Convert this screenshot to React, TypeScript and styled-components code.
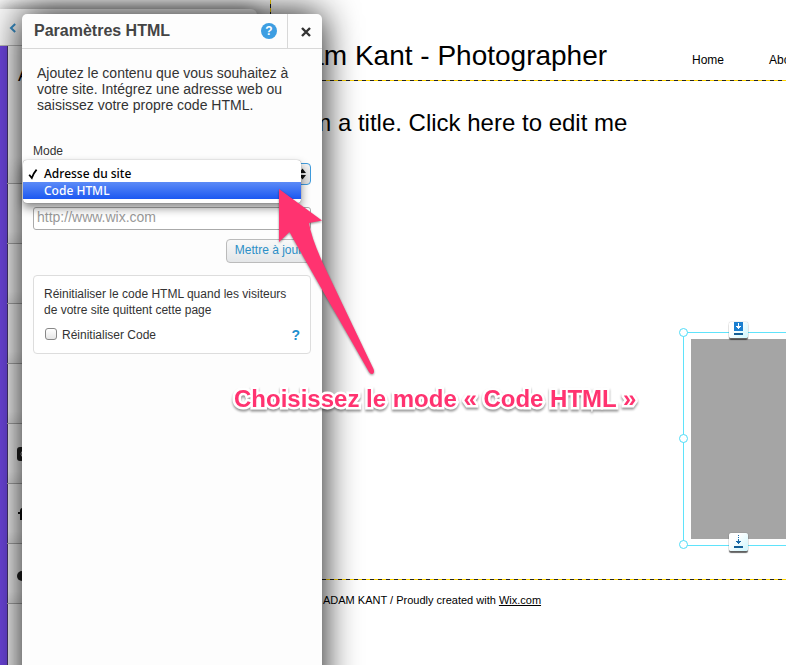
import React, { useState } from "react";
import styled, { createGlobalStyle } from "styled-components";

const SANS = '"Liberation Sans", Arial, sans-serif';

const GlobalStyle = createGlobalStyle`
  *, *::before, *::after { box-sizing: border-box; }
  html, body { margin: 0; padding: 0; }
  body { background: #fff; font-family: ${SANS}; font-size: 12px; overflow: hidden; }
  h1, h2, p { margin: 0; font-weight: 400; }
  button, input, select { font-family: inherit; }
`;

const Screen = styled.div`
  position: relative;
  min-height: 100vh;
  overflow: hidden;
`;

/* ---------- edited web site ---------- */

const Site = styled.main`
  display: flex;
  flex-direction: column;
  min-height: 100vh;
  margin-left: 270px;
  color: #000;
  background: repeating-linear-gradient(180deg, #ffd500 0 4px, #222 4px 8px) left top / 1px 100% no-repeat;
`;

const DashedRule = styled.div`
  height: 1px;
  background: repeating-linear-gradient(90deg, #ffd500 0 4px, #222 4px 8px);
`;

const SiteHeader = styled.header`
  display: flex;
  align-items: flex-start;
  justify-content: space-between;
  height: 80px;
  padding: 40px 0 0 4px;
  white-space: nowrap;
`;

const SiteName = styled.h1`
  font-size: 28px;
  line-height: 32px;
`;

const SiteNav = styled.nav`
  display: flex;
  flex: none;
  gap: 45px;
  width: 94px;
  line-height: 40px;
`;

const NavLink = styled.a`
  color: #000;
  font-size: 12px;
  text-decoration: none;
`;

const Headline = styled.h2`
  padding: 26px 0 0 30px;
  font-size: 24px;
  line-height: 32px;
  white-space: nowrap;
`;

const Stage = styled.section`
  display: flex;
  justify-content: flex-end;
  padding: 193px 0 33px;
  overflow: hidden;
`;

const Selection = styled.div`
  position: relative;
  width: 103px;
  padding: 6px 0 6px 7px;
  border: 1px solid #5fe3fb;
  border-right: 0;
`;

const Placeholder = styled.div`
  height: 200px;
  background: #a5a5a5;
`;

const Handle = styled.span<{ $top: string }>`
  position: absolute;
  left: -5px;
  top: ${(p) => p.$top};
  width: 9px;
  height: 9px;
  margin-top: -5px;
  border: 1px solid #4fdcf7;
  border-radius: 50%;
  background: #fff;
`;

const AnchorButton = styled.button<{ $edge: "top" | "bottom" }>`
  position: absolute;
  left: 45px;
  ${(p) => p.$edge}: ${(p) => (p.$edge === "top" ? "-11px" : "-6px")};
  display: flex;
  align-items: flex-start;
  justify-content: center;
  width: 19px;
  height: ${(p) => (p.$edge === "top" ? 16 : 18)}px;
  padding: 0;
  border: 0;
  border-radius: 2px;
  background: linear-gradient(135deg, #fff 30%, #cdf6fd);
  box-shadow: 0 2px 1px rgba(0, 0, 0, 0.6), 0 0 1px rgba(0, 0, 0, 0.5);
`;

const SiteFooter = styled.footer`
  padding: 12px 0 0 53px;
  font-size: 11px;
  line-height: 16px;
  a { color: #000; }
`;

/* ---------- panel behind the dialog ---------- */

const SidePanel = styled.aside`
  position: absolute;
  top: 9px;
  bottom: 0;
  left: 0;
  width: 257px;
  display: flex;
  flex-direction: column;
  border-top-right-radius: 6px;
  background: #fafafa;
  box-shadow: 0 0 20px rgba(0, 0, 0, 0.55);
`;

const SideHeader = styled.div`
  height: 37px;
  padding: 10px 6px;
  border-bottom: 1px solid #bbb;
`;

const BackButton = styled.button`
  display: flex;
  align-items: center;
  justify-content: center;
  width: 14px;
  height: 18px;
  padding: 0;
  border: 0;
  background: none;
`;

const SideList = styled.div`
  flex: 1;
  border-left: 7px solid #6c45de;
  box-shadow: inset 1px 0 0 #46336f;
`;

const SideRow = styled.div<{ $tall?: boolean }>`
  display: flex;
  align-items: center;
  height: ${(p) => (p.$tall ? 138 : 60)}px;
  padding-left: 10px;
  border-bottom: 1px solid #aaa;
  background: linear-gradient(transparent 80%, rgba(0, 0, 0, 0.08));
`;

const SideTitle = styled.span`
  align-self: flex-start;
  margin-top: 19px;
  padding-left: 1px;
  font-size: 18px;
`;

/* ---------- settings dialog ---------- */

const Dialog = styled.section`
  position: absolute;
  top: 14px;
  bottom: -60px;
  left: 22px;
  width: 300px;
  border-radius: 5px;
  background: #fdfdfd;
  box-shadow: 0 0 36px rgba(0, 0, 0, 0.95);
  color: #333;
`;

const DialogHeader = styled.header`
  display: flex;
  align-items: center;
  height: 35px;
  padding-left: 12px;
  border-bottom: 1px solid #d8d8d8;
`;

const DialogTitle = styled.h2`
  flex: 1;
  font-size: 16px;
  line-height: 20px;
  font-weight: 700;
  color: #444;
`;

const HelpButton = styled.button`
  width: 16px;
  height: 16px;
  margin-right: 10px;
  padding: 0;
  border: 0;
  border-radius: 50%;
  background: #3d9ee2;
  color: #fff;
  font-size: 12px;
  font-weight: 700;
  line-height: 16px;
`;

const CloseButton = styled.button`
  display: flex;
  align-items: center;
  justify-content: center;
  width: 35px;
  height: 34px;
  padding: 2px 0 0 2px;
  border: 0;
  border-left: 1px solid #d8d8d8;
  background: none;
`;

const DialogBody = styled.div`
  display: flex;
  flex-direction: column;
  padding: 16px 11px;
`;

const Intro = styled.p`
  padding-left: 4px;
  font-size: 14px;
  line-height: 16px;
  margin-bottom: 30px;
`;

const ModeLabel = styled.label`
  font-size: 12px;
  line-height: 16px;
`;

const ModeField = styled.div`
  position: relative;
  margin: 4px 0 22px;
`;

const ModeSelect = styled.select`
  display: block;
  width: 100%;
  height: 22px;
  padding: 0 20px 0 10px;
  appearance: none;
  border: 1px solid #3f9bdc;
  border-radius: 4px;
  background: linear-gradient(#f4f4f4, #dedede);
  font-size: 12px;
`;

const Carets = styled.svg`
  position: absolute;
  top: 5px;
  right: 5px;
  pointer-events: none;
`;

const Menu = styled.div`
  position: absolute;
  top: -3px;
  left: -10px;
  right: 10px;
  z-index: 2;
  padding: 5px 0 4px;
  border-radius: 4px;
  background: #fff;
  box-shadow: 0 0 1px rgba(0, 0, 0, 0.5), 0 5px 10px rgba(0, 0, 0, 0.45);
`;

const MenuItem = styled.button<{ $active: boolean }>`
  display: flex;
  align-items: center;
  width: 100%;
  height: 17px;
  padding: 0 0 0 5px;
  border: 0;
  gap: 5px;
  background: ${(p) => (p.$active ? "linear-gradient(#5c8bf7, #1c58f1)" : "none")};
  color: ${(p) => (p.$active ? "#fff" : "#000")};
  font-family: "Noto Sans", "Open Sans", sans-serif;
  font-size: 12px;
  font-weight: 500;
  line-height: 17px;
  text-align: left;
`;

const Tick = styled.span`
  display: flex;
  width: 11px;
`;

const UrlInput = styled.input`
  width: 100%;
  height: 23px;
  padding: 0 3px 3px;
  border: 1px solid #aaa;
  border-radius: 3px;
  background: #fff;
  font-size: 14px;
  &::placeholder { color: #999; opacity: 1; }
`;

const UpdateButton = styled.button`
  align-self: flex-end;
  height: 24px;
  width: 85px;
  margin: 9px 0 12px;
  padding: 0 0 2px;
  border: 1px solid #bbb;
  border-radius: 4px;
  background: linear-gradient(#f8f8f8, #e4e6e8);
  color: #2b8fc7;
  font-size: 12px;
`;

const ResetBox = styled.div`
  display: flex;
  flex-direction: column;
  gap: 9px;
  padding: 10px;
  border: 1px solid #ddd;
  border-radius: 4px;
  background: #fff;
`;

const ResetText = styled.p`
  line-height: 16px;
  white-space: nowrap;
`;

const ResetRow = styled.div`
  display: flex;
  align-items: center;
  height: 16px;
`;

const Check = styled.input`
  appearance: none;
  width: 12px;
  height: 12px;
  margin: 0 5px 2px 1px;
  border: 1px solid #888;
  border-radius: 3px;
  background: linear-gradient(#fff, #e6e6e6);
`;

const ResetLabel = styled.label`
  flex: 1;
`;

const InlineHelp = styled.button`
  padding: 0;
  border: 0;
  background: none;
  color: #1f8fce;
  font-size: 14px;
  font-weight: 700;
  line-height: 16px;
`;

/* ---------- annotation ---------- */

const Pointer = styled.svg`
  position: absolute;
  left: 270px;
  top: 180px;
  z-index: 3;
  pointer-events: none;
  filter: drop-shadow(0 1px 1px rgba(0, 0, 0, 0.45));
`;

const Callout = styled.p`
  position: absolute;
  left: 234px;
  top: 384px;
  z-index: 3;
  color: #ff3370;
  font-size: 24px;
  font-weight: 700;
  line-height: 30px;
  white-space: nowrap;
  -webkit-text-stroke: 5px #fff;
  paint-order: stroke fill;
  filter: drop-shadow(0 2px 1px rgba(0, 0, 0, 0.4));
`;

const TickIcon = () => (
  <svg width="11" height="12" viewBox="0 0 11 12" aria-hidden="true">
    <path d="M1.2 6.8 L3.8 10 C5 6.8 6.4 4 8.6 1.6" fill="none" stroke="#000" strokeWidth="1.8" />
  </svg>
);

const modes = ["Adresse du site", "Code HTML"];

function SiteCanvas() {
  return (
    <Site>
      <SiteHeader>
        <SiteName>Adam Kant - Photographer</SiteName>
        <SiteNav>
          <NavLink href="#home">Home</NavLink>
          <NavLink href="#about">About</NavLink>
        </SiteNav>
      </SiteHeader>
      <DashedRule />
      <Headline>I'm a title. Click here to edit me</Headline>
      <Stage>
        <Selection>
          <Placeholder />
          <Handle $top="0%" />
          <Handle $top="50%" />
          <Handle $top="100%" />
          <AnchorButton $edge="top" aria-label="Étirer vers le haut">
            <svg width="9" height="14" viewBox="0 0 9 14">
              <rect width="9" height="9" fill="#1b7fd0" />
              <path d="M4 1h1v3h2v1h-1v1h-1v1h-1v-1h-1v-1h-1v-1h2z" fill="#fff" />
              <rect y="11" width="9" height="2" fill="#145f96" />
            </svg>
          </AnchorButton>
          <AnchorButton $edge="bottom" aria-label="Étirer vers le bas">
            <svg width="9" height="16" viewBox="0 0 9 16">
              <path d="M4 2h1v1h-1zM4 4h1v1h-1zM4 6h1v2h2v1h-1v1h-1v1h-1v-1h-1v-1h-1v-1h2z" fill="#1668a8" />
              <rect y="13" width="9" height="2" fill="#145f96" />
            </svg>
          </AnchorButton>
        </Selection>
      </Stage>
      <DashedRule />
      <SiteFooter>
        ADAM KANT / Proudly created with <a href="#wix">Wix.com</a>
      </SiteFooter>
    </Site>
  );
}

function BackPanel() {
  return (
    <SidePanel>
      <SideHeader>
        <BackButton aria-label="Retour">
          <svg width="8" height="10" viewBox="0 0 8 10">
            <path d="M6.2 1 L2 5 L6.2 9" fill="none" stroke="#3a92cc" strokeWidth="2" />
          </svg>
        </BackButton>
      </SideHeader>
      <SideList>
        <SideRow $tall>
          <SideTitle>A</SideTitle>
        </SideRow>
        <SideRow />
        <SideRow />
        <SideRow />
        <SideRow />
        <SideRow>
          <svg width="14" height="14" viewBox="0 0 14 14">
            <rect width="14" height="14" rx="3" fill="#222" />
            <circle cx="7" cy="7" r="3" fill="none" stroke="#ccc" />
          </svg>
        </SideRow>
        <SideRow>
          <svg width="8" height="12" viewBox="0 0 8 12">
            <path d="M3 12V6H1V4h2V3c0-2 1-3 3-3h1v2H6C5 2 5 2 5 4h2v2H5v6z" fill="#111" />
          </svg>
        </SideRow>
        <SideRow>
          <svg width="22" height="14" viewBox="0 0 22 14">
            <circle cx="5" cy="9" r="5" fill="#222" />
            <circle cx="17" cy="9" r="5" fill="#222" />
          </svg>
        </SideRow>
      </SideList>
    </SidePanel>
  );
}

export default function App() {
  const [mode, setMode] = useState(modes[0]);
  const [hovered, setHovered] = useState(modes[1]);

  return (
    <>
      <GlobalStyle />
      <Screen>
        <SiteCanvas />
        <BackPanel />
        <Dialog role="dialog" aria-labelledby="dialog-title">
          <DialogHeader>
            <DialogTitle id="dialog-title">Paramètres HTML</DialogTitle>
            <HelpButton aria-label="Aide">?</HelpButton>
            <CloseButton aria-label="Fermer">
              <svg width="10" height="10" viewBox="0 0 10 10">
                <path d="M1 1 L9 9 M9 1 L1 9" stroke="#333" strokeWidth="2.4" />
              </svg>
            </CloseButton>
          </DialogHeader>
          <DialogBody>
            <Intro>
              Ajoutez le contenu que vous souhaitez à votre site. Intégrez une adresse web ou
              saisissez votre propre code HTML.
            </Intro>
            <ModeLabel htmlFor="mode">Mode</ModeLabel>
            <ModeField>
              <ModeSelect id="mode" value={mode} onChange={(e) => setMode(e.target.value)}>
                {modes.map((m) => (
                  <option key={m}>{m}</option>
                ))}
              </ModeSelect>
              <Carets width="7" height="12" viewBox="0 0 7 12">
                <path d="M0 5 L3.5 0.5 L7 5 Z M0 7 L3.5 11.5 L7 7 Z" fill="#111" />
              </Carets>
              <Menu role="listbox" aria-label="Mode">
                {modes.map((m) => (
                  <MenuItem
                    key={m}
                    role="option"
                    aria-selected={m === mode}
                    $active={m === hovered}
                    onMouseEnter={() => setHovered(m)}
                    onClick={() => setMode(m)}
                  >
                    <Tick>{m === mode && <TickIcon />}</Tick>
                    {m}
                  </MenuItem>
                ))}
              </Menu>
            </ModeField>
            <UrlInput aria-label="Adresse du site" placeholder="http://www.wix.com" />
            <UpdateButton>Mettre à jour</UpdateButton>
            <ResetBox>
              <ResetText>
                Réinitialiser le code HTML quand les visiteurs
                <br />
                de votre site quittent cette page
              </ResetText>
              <ResetRow>
                <Check id="reset" type="checkbox" />
                <ResetLabel htmlFor="reset">Réinitialiser Code</ResetLabel>
                <InlineHelp aria-label="Aide sur la réinitialisation">?</InlineHelp>
              </ResetRow>
            </ResetBox>
          </DialogBody>
        </Dialog>
        <Pointer width="110" height="200" viewBox="0 0 110 200">
          <path
            d="M9 9 L52 40.5 L39 43 Q42 62 60 98 L103.500 189 Q105 193 102.500 194 Q100.500 194.500 99 192 L46 99 Q30 71 19.500 52 L9 62 Z"
            fill="#ff3370"
          />
        </Pointer>
        <Callout>Choisissez le mode « Code HTML »</Callout>
      </Screen>
    </>
  );
}
